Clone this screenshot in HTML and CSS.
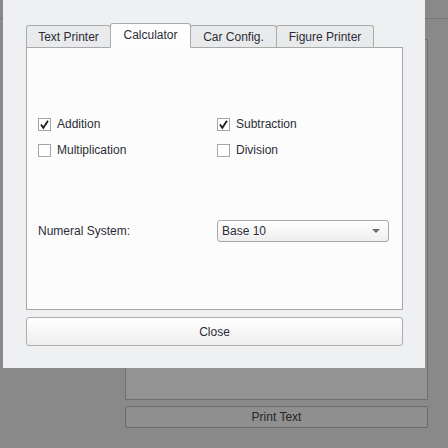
FILE: index.html
```html
<!DOCTYPE html>
<html>
<head>
<meta charset="utf-8">
<link rel="stylesheet" href="styles.css">
</head>
<body>
<div class="app">
  <div class="app-header"></div>
  <div class="app-body">
    <div class="app-output"></div>
    <div class="app-button">Print Text</div>
  </div>
</div>

<div class="dialog">
  <div class="tabs">
    <div class="tab tab-text">Text Printer</div>
    <div class="tab tab-calc active">Calculator</div>
    <div class="tab tab-car">Car Config.</div>
    <div class="tab tab-figure">Figure Printer</div>
  </div>
  <div class="panel">
    <div class="ops">
      <label class="check">
        <span class="box"><svg viewBox="0 0 13 13" width="13" height="13"><path d="M3 6.5 L5.3 9.8 L10 2.8" fill="none" stroke="#1c1c1c" stroke-width="1.8" stroke-linejoin="miter"/></svg></span>
        <span>Addition</span>
      </label>
      <label class="check">
        <span class="box"><svg viewBox="0 0 13 13" width="13" height="13"><path d="M3 6.5 L5.3 9.8 L10 2.8" fill="none" stroke="#1c1c1c" stroke-width="1.8" stroke-linejoin="miter"/></svg></span>
        <span>Subtraction</span>
      </label>
      <label class="check">
        <span class="box"></span>
        <span>Multiplication</span>
      </label>
      <label class="check">
        <span class="box"></span>
        <span>Division</span>
      </label>
    </div>
    <div class="numeral">
      <span class="numeral-label">Numeral System:</span>
      <div class="select">
        <span>Base 10</span>
        <span class="arrow"></span>
      </div>
    </div>
  </div>
  <div class="close-btn">Close</div>
</div>
</body>
</html>
```

FILE: styles.css
```css
* { box-sizing: border-box; }
html, body {
  margin: 0;
  padding: 0;
}
body {
  width: 448px;
  height: 448px;
  overflow: hidden;
  background: #898989;
  font-family: "Liberation Sans", Arial, sans-serif;
  font-size: 12px;
  color: #2c2c36;
  position: relative;
}

/* background application (dimmed) */
.app-header {
  height: 19px;
  border-bottom: 1px solid #777777;
}
.app-body {
  padding-left: 125px;
  padding-top: 20px;
}
.app-output {
  width: 303px;
  height: 361px;
  border: 1px solid #6f6f6f;
  background: #939393;
}
.app-button {
  margin-top: 6px;
  width: 303px;
  height: 22px;
  border: 1px solid #6b6b6b;
  border-radius: 2px;
  background: #8f8f8f;
  color: #262626;
  display: flex;
  align-items: center;
  justify-content: center;
}

/* dialog */
.dialog {
  position: absolute;
  left: 3px;
  top: 0;
  width: 422px;
  height: 368px;
  background: #eff0f1;
  padding: 23px 22px 0 23px;
}
.tabs {
  display: flex;
  align-items: flex-end;
  height: 25px;
  margin-bottom: -1px;
  position: relative;
  z-index: 1;
}
.tab {
  height: 23px;
  border: 1px solid #ababab;
  border-bottom-color: #a9a9a9;
  border-radius: 3px 3px 0 0;
  background: #e9eaeb;
  display: flex;
  align-items: center;
  justify-content: center;
  white-space: nowrap;
}
.tab + .tab { margin-left: -1px; }
.tab-text { width: 85px; }
.tab-calc { width: 81px; }
.tab-car { width: 87px; }
.tab-figure { width: 98px; }
.tab.active {
  height: 25px;
  background: #fdfdfd;
  border-bottom-color: #fdfdfd;
  padding-bottom: 2px;
  position: relative;
  z-index: 2;
}
.panel {
  height: 263px;
  border: 1px solid #a9a9a9;
  background: #fcfcfc;
  padding: 67px 0 0 11px;
}
.ops {
  display: grid;
  grid-template-columns: 179px 172px;
  grid-auto-rows: 18px;
  row-gap: 8px;
}
.check {
  display: flex;
  align-items: center;
  gap: 6px;
}
.box {
  width: 13px;
  height: 13px;
  border: 1px solid #a5a5a5;
  background: #ffffff;
  display: flex;
  align-items: center;
  justify-content: center;
}
.box svg { display: block; flex: none; }
.numeral {
  margin-top: 61px;
  display: grid;
  grid-template-columns: 179px 172px;
  align-items: center;
}
.select {
  height: 22px;
  border: 1px solid #a8a8a8;
  border-radius: 3px;
  background: linear-gradient(#ffffff, #eeeeee);
  display: flex;
  align-items: center;
  justify-content: space-between;
  padding: 0 8px 0 4px;
}
.arrow {
  width: 0;
  height: 0;
  border-left: 4px solid transparent;
  border-right: 4px solid transparent;
  border-top: 4px solid #6a6a6a;
}
.close-btn {
  margin-top: 7px;
  height: 29px;
  border: 1px solid #adadad;
  border-radius: 3px;
  background: linear-gradient(#ffffff, #eeeeee);
  display: flex;
  align-items: center;
  justify-content: center;
}
```
